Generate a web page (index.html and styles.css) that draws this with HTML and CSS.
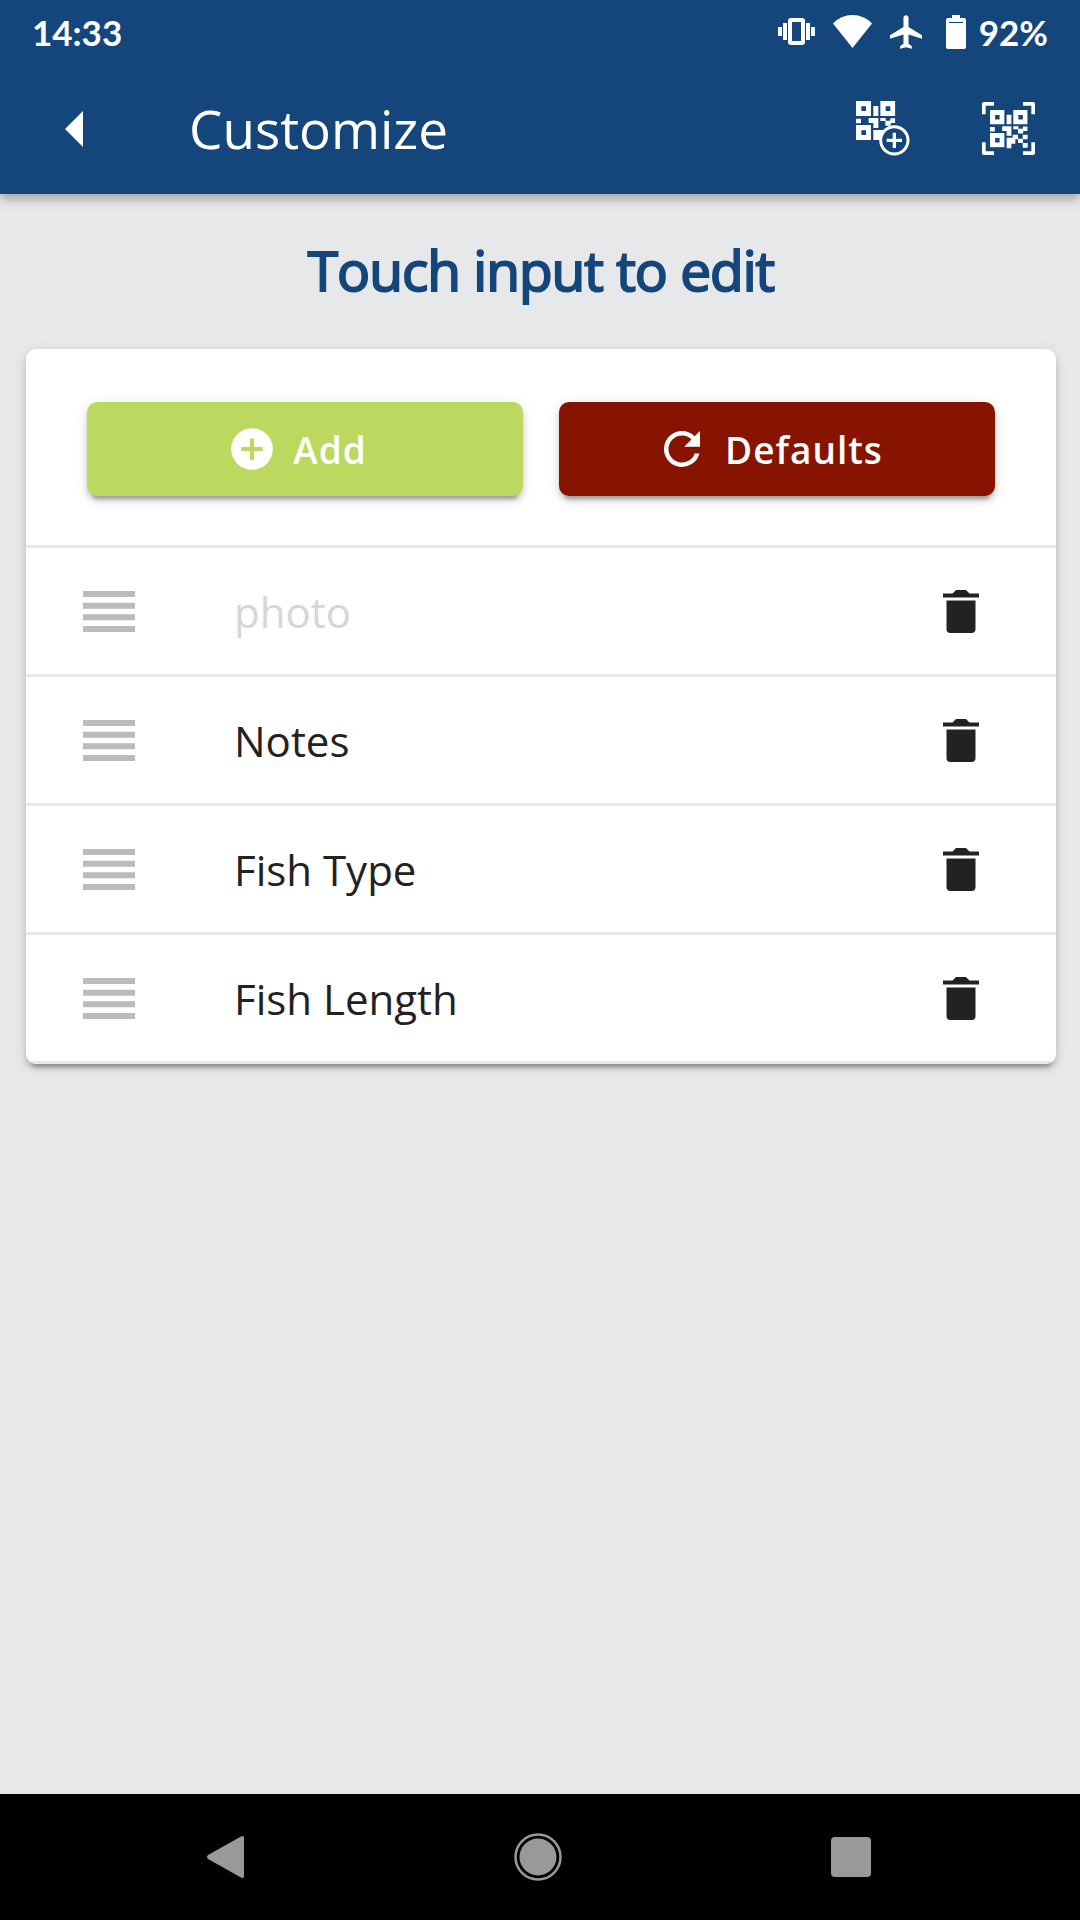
FILE: index.html
```
<!DOCTYPE html>
<html lang="en">

<head>
  <meta charset="UTF-8">
  <meta name="viewport" content="width=device-width, initial-scale=1.0">
  <link rel="stylesheet" href="styles.css">
  <title>Customize</title>
</head>

<body>

  <!-- shared icons -->
  <svg class="sprite" aria-hidden="true">
    <symbol id="drag" viewBox="0 0 52 41">
      <path d="M0 0h52v6H0zM0 11.7h52v6H0zM0 23.3h52v6H0zM0 35h52v6H0z" />
    </symbol>
    <symbol id="trash" viewBox="0 0 36 43">
      <path d="M0 3.5h9.5L13 0h10l3.500 3.500H36v4H0zM3.500 10.500h29V39q0 4-4 4h-21q-4 0-4-4z" />
    </symbol>
    <symbol id="qr" viewBox="0 0 118 118">
      <path fill-rule="evenodd" d="M0 0h45v45H0zM16 16v14h14V16zM73 0h45v45H73zM89 16v14h14V16zM0 72h45v45H0zM16 88v14h14V88z" />
      <path d="M52 15h15v30H52zM0 53h15v14H0zM38 51h29v30H52V66H38zM73 51h16v9H73zM88 59h16v15H88zM103 52h15v14h-15z" />
    </symbol>
  </svg>

  <header class="header">
    <div class="status-bar">
      <span class="time">14:33</span>
      <svg class="vibrate" width="37" height="27" viewBox="0 0 37 27">
        <path fill="none" stroke="currentColor" stroke-width="4" d="M13 2h11q1 0 1 1v21q0 1-1 1H13q-1 0-1-1V3q0-1 1-1zM7 5v17M2 9v9M30 5v17M35 9v9" />
      </svg>
      <svg class="wifi" width="39" height="33" viewBox="0 0 39 33">
        <path fill="currentColor" d="M0 8.500Q8 0 19.500 0T39 8.500L19.500 33z" />
      </svg>
      <svg class="plane" width="32" height="34" viewBox="2 2 19 20">
        <path fill="currentColor" d="M21 16v-2l-8-5V3.500C13 2.670 12.330 2 11.500 2S10 2.670 10 3.500V9l-8 5v2l8-2.500V19l-2 1.500V22l3.500-1 3.500 1v-1.500L13 19v-5.500z" />
      </svg>
      <svg class="battery" width="20" height="34" viewBox="0 0 20 34">
        <path fill="currentColor" fill-rule="evenodd" d="M6 0h8v3h4q2 0 2 2v27q0 2-2 2H2q-2 0-2-2V5q0-2 2-2h4zM3 7v1h14V7z" />
      </svg>
      <span class="percent">92%</span>
    </div>
    <div class="app-bar">
      <button class="icon-button back" aria-label="Back">
        <svg width="18" height="36" viewBox="0 0 18 36"><path fill="currentColor" d="M18 0v36L0 18z" /></svg>
      </button>
      <h1 class="title">Customize</h1>
      <button class="icon-button" aria-label="Add QR code">
        <svg width="54" height="55" viewBox="0 0 162 165" fill="currentColor">
          <use href="#qr" width="118" height="118" />
          <path d="M52 87h30v30H52z" />
          <circle class="plus-ring" cx="115" cy="118" r="41" />
          <path d="M110 95h10v18h18v10h-18v18h-10v-18H92v-10h18z" />
        </svg>
      </button>
      <button class="icon-button" aria-label="Scan QR code">
        <svg width="53" height="53" viewBox="0 0 159 159" fill="currentColor">
          <path d="M6 0h30v11H11v26H0V6q0-6 6-6zM123 0h30q6 0 6 6v31h-11V11h-25zM0 121h11v27h25v11H6q-6 0-6-6zM148 121h11v32q0 6-6 6h-30v-11h25z" />
          <use href="#qr" x="24" y="24" width="113" height="113" />
          <path d="M74 107h18v-9h16v12h14v-12h15v14h-14v11h14v14h-15v-14h-14v-11h-8v13H88v14H74z" />
        </svg>
      </button>
    </div>
  </header>

  <main class="content">
    <h2 class="hint">Touch input to edit</h2>

    <div class="card">
      <div class="actions">
        <button class="button add">
          <svg width="50" height="50" viewBox="0 0 24 24">
            <path fill="currentColor" fill-rule="evenodd" d="M12 2a10 10 0 1 0 0 20 10 10 0 1 0 0-20zM11 7h2v4h4.200v2H13v4.200h-2V13H6.800v-2H11z" />
          </svg>
          Add
        </button>
        <button class="button defaults">
          <svg width="54" height="54" viewBox="0 0 24 24">
            <path fill="currentColor" d="M17.650 6.350C16.200 4.900 14.210 4 12 4a8 8 0 1 0 7.730 10h-2.080A6 6 0 1 1 12 6c1.660 0 3.140.69 4.220 1.780L13 11h7V4z" />
          </svg>
          Defaults
        </button>
      </div>

      <ul class="inputs">
        <li class="row disabled">
          <svg class="handle"><use href="#drag" /></svg>
          <span class="name">photo</span>
          <button class="icon-button" aria-label="Delete photo"><svg class="trash"><use href="#trash" /></svg></button>
        </li>
        <li class="row">
          <svg class="handle"><use href="#drag" /></svg>
          <span class="name">Notes</span>
          <button class="icon-button" aria-label="Delete Notes"><svg class="trash"><use href="#trash" /></svg></button>
        </li>
        <li class="row">
          <svg class="handle"><use href="#drag" /></svg>
          <span class="name">Fish Type</span>
          <button class="icon-button" aria-label="Delete Fish Type"><svg class="trash"><use href="#trash" /></svg></button>
        </li>
        <li class="row">
          <svg class="handle"><use href="#drag" /></svg>
          <span class="name">Fish Length</span>
          <button class="icon-button" aria-label="Delete Fish Length"><svg class="trash"><use href="#trash" /></svg></button>
        </li>
      </ul>
    </div>
  </main>

  <nav class="nav-bar">
    <button class="icon-button" aria-label="System back">
      <svg width="37" height="42" viewBox="0 0 37 42"><path fill="currentColor" d="M34 .500Q37-1 37 2v38q0 3-3 1.500L1 23q-2-2 0-4z" /></svg>
    </button>
    <button class="icon-button" aria-label="Home">
      <svg width="48" height="48" viewBox="0 0 48 48">
        <circle cx="24" cy="24" r="22.500" fill="none" stroke="currentColor" stroke-width="2.500" />
        <circle cx="24" cy="24" r="18.500" fill="currentColor" />
      </svg>
    </button>
    <button class="icon-button" aria-label="Recent apps">
      <svg width="40" height="40" viewBox="0 0 40 40"><rect width="40" height="40" rx="4" fill="currentColor" /></svg>
    </button>
  </nav>

</body>

</html>
```
FILE: styles.css
```
* {
  box-sizing: border-box;
}

body {
  margin: 0;
  min-height: 100vh;
  display: flex;
  flex-direction: column;
  background-color: #e7e8ea;
  color: #222222;
  font-family: "Open Sans", "Noto Sans", sans-serif;
}

svg {
  display: block;
  flex-shrink: 0;
}

.sprite {
  position: absolute;
  width: 0;
  height: 0;
}

.icon-button {
  padding: 0;
  border: none;
  background: none;
  color: inherit;
  cursor: pointer;
}

.header {
  background-color: #15467b;
  color: #ffffff;
  box-shadow: 0 5px 10px rgba(0, 0, 0, 0.3);
}

.status-bar {
  display: flex;
  align-items: center;
  height: 63px;
  padding: 0 32px;
  font-family: Lato, sans-serif;
  font-size: 35px;
  font-weight: 700;
}

.time {
  flex: 1;
}

.wifi,
.plane {
  margin-left: 18px;
}

.battery {
  margin-left: 24px;
}

.percent {
  margin-left: 13px;
}

.app-bar {
  display: flex;
  align-items: center;
  height: 131px;
  padding: 0 45px 0 65px;
}

.title {
  flex: 1;
  margin: 0 0 0 106px;
  font-size: 53px;
  font-weight: 400;
}

.app-bar .icon-button + .icon-button,
.app-bar .title + .icon-button + .icon-button {
  margin-left: 72px;
}

.plus-ring {
  fill: #15467b;
  stroke: #ffffff;
  stroke-width: 9;
}

.content {
  flex: 1;
  padding: 38px 24px 38px 26px;
}

.hint {
  margin: 0 0 42px;
  color: #15467b;
  font-size: 55px;
  font-weight: 400;
  line-height: 75px;
  letter-spacing: -1px;
  text-align: center;
  -webkit-text-stroke: 2px #15467b;
}

.card {
  overflow: hidden;
  border-radius: 10px;
  background-color: #ffffff;
  box-shadow: 0 8px 3px -5px rgba(0, 0, 0, 0.2),
    0 5px 5px rgba(0, 0, 0, 0.14),
    0 3px 13px rgba(0, 0, 0, 0.12);
}

.actions {
  display: grid;
  grid-template-columns: 1fr 1fr;
  gap: 36px;
  padding: 53px 61px 49px;
  border-bottom: 3px solid #e7e8ea;
}

.button {
  display: flex;
  align-items: center;
  justify-content: center;
  gap: 16px;
  height: 94px;
  padding: 0 16px 0 0;
  border: none;
  border-radius: 10px;
  color: #ffffff;
  font-family: inherit;
  font-size: 37px;
  font-weight: 600;
  letter-spacing: 1px;
  box-shadow: 0 8px 3px -5px rgba(0, 0, 0, 0.2),
    0 5px 5px rgba(0, 0, 0, 0.14),
    0 3px 13px rgba(0, 0, 0, 0.12);
  cursor: pointer;
}

.add {
  background-color: #bdd85f;
}

.defaults {
  background-color: #861400;
}

.inputs {
  margin: 0;
  padding: 0;
  list-style: none;
}

.row {
  display: flex;
  align-items: center;
  height: 129px;
  padding: 0 77px 0 57px;
  border-bottom: 3px solid #e7e8ea;
}

.handle {
  width: 52px;
  height: 41px;
  fill: #bbbbbb;
}

.name {
  flex: 1;
  margin-left: 99px;
  font-size: 42px;
}

.disabled .name {
  color: #d5d6d8;
}

.trash {
  width: 36px;
  height: 43px;
  fill: #222222;
}

.nav-bar {
  display: flex;
  align-items: center;
  justify-content: space-between;
  height: 126px;
  padding: 0 209px 0 207px;
  background-color: #000000;
  color: #999999;
}
```
